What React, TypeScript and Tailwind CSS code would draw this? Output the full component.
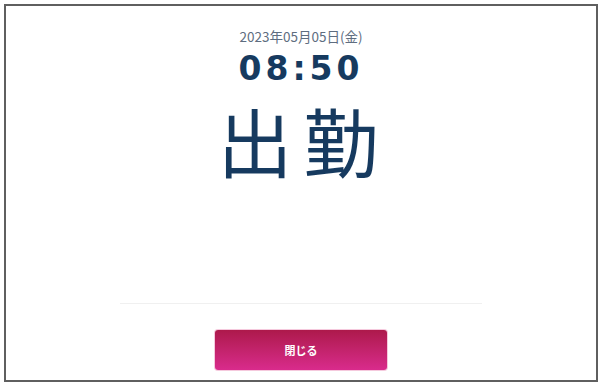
export default function App() {
  return (
    <div className="w-[601px] h-[385px] bg-white pt-1 pl-1">
      {/* 打刻結果ダイアログ */}
      <div className="w-[594px] h-[378px] border-2 border-[#5f5f5f] flex flex-col items-center font-['Noto_Sans_CJK_JP','Noto_Sans',sans-serif]">
        <div className="mt-[21px] text-[13.5px] leading-[18px] text-[#5e6d80]">2023年05月05日(金)</div>
        <div className="mt-[6px] text-[33px] leading-[36px] font-bold tracking-[4px] text-[#163a5f] font-['DejaVu_Sans',sans-serif]">
          08:50
        </div>
        <div className="mt-[13px] text-[75px] leading-[80px] tracking-[11px] pl-[5px] text-[#163a5f]">出勤</div>
        <div className="mt-[123px] w-[362px] border-t border-[#f0f0f0]"></div>
        <button className="mt-[26px] w-[172px] h-[40px] rounded-[3px] bg-gradient-to-b from-[#ad194b] to-[#d92b8c] text-white text-[11px] font-bold shadow-[0_0_0_1px_rgba(230,120,170,0.4)]">
          閉じる
        </button>
      </div>
    </div>
  );
}
